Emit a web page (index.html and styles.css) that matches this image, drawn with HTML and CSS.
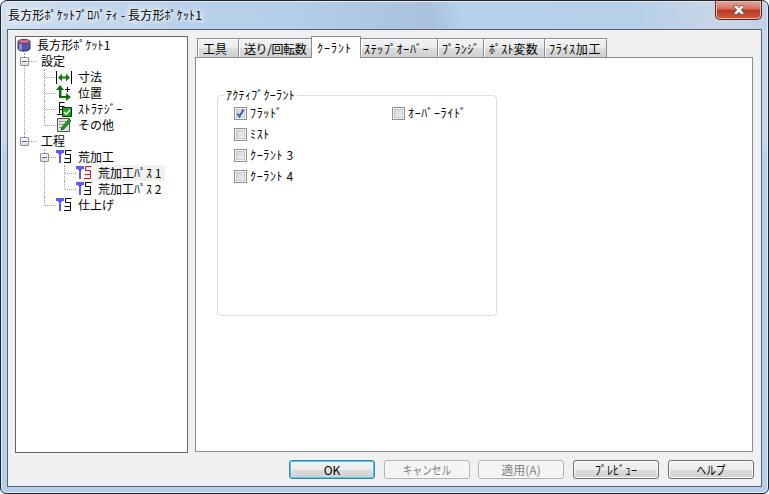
FILE: index.html
```
<!DOCTYPE html>
<html lang="ja">
<head>
    <meta charset="UTF-8">
    <title>長方形ﾎﾟｹｯﾄﾌﾟﾛﾊﾟﾃｨ</title>
    <link rel="stylesheet" href="styles.css">
</head>
<body>
    <svg class="defs" width="0" height="0">
        <symbol id="mill" viewBox="0 0 16 16">
            <path class="tool" d="M0 1h8v3H6v1H5v9H3V5H2V4H0z"/>
            <path class="path" d="M15.500 1.500H9.500v4h5v4H8.500M14.500 9.500v4H8"/>
        </symbol>
    </svg>
    <div class="window">
        <div class="titlebar">
            <span class="title">長方形ﾎﾟｹｯﾄﾌﾟﾛﾊﾟﾃｨ - 長方形ﾎﾟｹｯﾄ1</span>
            <button class="close">
                <svg width="12" height="10" viewBox="0 0 12 10"><path d="M1 .7h3.200L6 2.700 7.800.7H11V2L8.200 5 11 8v1.300H7.800L6 7.300 4.200 9.300H1V8l2.800-3L1 2z"/></svg>
            </button>
        </div>
        <div class="client">
            <div class="main">
                <div class="tree">
                    <div class="node root">
                        <svg class="icon" width="14" height="16" viewBox="0 0 14 16"><path d="M1 4.500v7c0 3.500 12 3.500 12 0v-7z" fill="#5555a8" stroke="#333360"/><path d="M3.500 6v7" stroke="#8c8ce0" stroke-width="3"/><ellipse cx="7" cy="4.500" rx="6" ry="2.200" fill="#c0708c" stroke="#5a3a5c"/></svg>
                        <span>長方形ﾎﾟｹｯﾄ1</span>
                    </div>
                    <ul class="level1">
                        <li>
                            <div class="node"><i class="toggle"></i><span>設定</span></div>
                            <ul>
                                <li><div class="node">
                                    <svg class="icon" width="16" height="16" viewBox="0 0 16 16"><path d="M.5 2v13M15.500 2v13" stroke="#000"/><path d="M2 8.500 6 4.500v3h4v-3l4 4-4 4v-3H6v3z" fill="#0a800a"/></svg>
                                    <span>寸法</span></div></li>
                                <li><div class="node">
                                    <svg class="icon" width="16" height="16" viewBox="0 0 16 16"><path d="M4 0 8 5H5.500v6H10V8l5 4-5 4v-3H3V5H0z" fill="#0a700a"/><path d="M9 4.500h5M11.500 2v5" stroke="#000"/></svg>
                                    <span>位置</span></div></li>
                                <li><div class="node">
                                    <svg class="icon" width="16" height="16" viewBox="0 0 16 16"><path d="M8.500 1.500h-5v4h5M3.500 5.500v3h4M3.500 8.500v4M1 13.500h6" fill="none" stroke="#000"/><path d="M6.500 6.500h9v9h-9z" fill="#20a020" stroke="#064006"/><path d="m8 11 2.200 2.200L14 9" fill="none" stroke="#fff" stroke-width="1.500"/></svg>
                                    <span class="kana">ｽﾄﾗﾃｼﾞｰ</span></div></li>
                                <li><div class="node">
                                    <svg class="icon" width="16" height="16" viewBox="0 0 16 16"><path d="M1.500 1.500h12v13h-12z" fill="#e4e4e4" stroke="#555"/><path d="M3 4.500h7M3 7.500h6M3 10.500h3" stroke="#999"/><path d="m5 13 1-3 7-8 2 2-7 8z" fill="#20a020" stroke="#064006" stroke-width=".7"/></svg>
                                    <span>その他</span></div></li>
                            </ul>
                        </li>
                        <li>
                            <div class="node"><i class="toggle"></i><span>工程</span></div>
                            <ul>
                                <li>
                                    <div class="node"><i class="toggle"></i><svg class="icon" width="16" height="16"><use href="#mill"/></svg><span>荒加工</span></div>
                                    <ul class="passes">
                                        <li><div class="node active"><svg class="icon" width="16" height="16"><use href="#mill"/></svg><span>荒加工ﾊﾟｽ 1</span></div></li>
                                        <li><div class="node"><svg class="icon" width="16" height="16"><use href="#mill"/></svg><span>荒加工ﾊﾟｽ 2</span></div></li>
                                    </ul>
                                </li>
                                <li><div class="node"><svg class="icon" width="16" height="16"><use href="#mill"/></svg><span>仕上げ</span></div></li>
                            </ul>
                        </li>
                    </ul>
                </div>
                <div class="content">
                    <div class="tabs">
                        <div class="tab tool-tab">工具</div>
                        <div class="tab feed-tab">送り/回転数</div>
                        <div class="tab coolant-tab selected">ｸｰﾗﾝﾄ</div>
                        <div class="tab step-tab">ｽﾃｯﾌﾟｵｰﾊﾞｰ</div>
                        <div class="tab plunge-tab">ﾌﾟﾗﾝｼﾞ</div>
                        <div class="tab post-tab">ﾎﾟｽﾄ変数</div>
                        <div class="tab mill-tab">ﾌﾗｲｽ加工</div>
                    </div>
                    <div class="panel">
                        <fieldset>
                            <legend>ｱｸﾃｨﾌﾞｸｰﾗﾝﾄ</legend>
                            <div class="options">
                                <label><i class="box"><svg width="9" height="9" viewBox="0 0 9 9"><path d="m1.500 4.500 2 3 4-7" fill="none" stroke="#3c5a9e" stroke-width="1.900"/></svg></i>ﾌﾗｯﾄﾞ</label>
                                <label><i class="box"></i>ｵｰﾊﾞｰﾗｲﾄﾞ</label>
                                <label><i class="box"></i>ﾐｽﾄ</label>
                                <label class="first"><i class="box"></i>ｸｰﾗﾝﾄ 3</label>
                                <label class="first"><i class="box"></i>ｸｰﾗﾝﾄ 4</label>
                            </div>
                        </fieldset>
                    </div>
                </div>
            </div>
            <div class="buttons">
                <button class="btn default">OK</button>
                <button class="btn cancel" disabled><span class="narrow">キャンセル</span></button>
                <button class="btn" disabled>適用(A)</button>
                <button class="btn">ﾌﾟﾚﾋﾞｭｰ</button>
                <button class="btn"><span class="narrow">ヘルプ</span></button>
            </div>
        </div>
    </div>
</body>
</html>
```
FILE: styles.css
```
* {
    box-sizing: border-box;
}
body {
    margin: 0;
    background: #fff;
    font: 12px/16px "Noto Sans CJK JP", sans-serif;
    color: #000;
    overflow: hidden;
}
.defs {
    position: absolute;
}
button {
    font: inherit;
    padding: 0;
}
.window {
    width: 769px;
    height: 494px;
    border: 1px solid #20242a;
    border-radius: 7px 7px 6px 6px;
    padding: 0 6px 6px;
    background:
        linear-gradient(75deg, #cfdff0 0, #b9d1ea 22%, #b4cfea 38%, #a9c1dc 56%, #b6d1ec 60%, #b6d0ea 82%, #c9d6e5 94%, #bcd2ea 100%) 0 0 / 100% 29px no-repeat,
        linear-gradient(#c8d9eb 0, #c8d9eb 28%, #b6d0ec 32%, #b6d0ec 100%);
    box-shadow: inset 0 0 0 1px #e4eef8;
}
.titlebar {
    height: 28px;
    display: flex;
    justify-content: space-between;
    padding-left: 1px;
}
.title {
    line-height: 27px;
    letter-spacing: .17px;
    text-shadow: 0 0 6px #fff, 0 0 6px #fff, 0 0 10px #fff;
}
.close {
    width: 47px;
    height: 19px;
    border: 1px solid #5b2424;
    border-top: 0;
    border-radius: 0 0 5px 5px;
    background: linear-gradient(#e5a598 0, #d3705e 45%, #b93620 50%, #d15c3c 100%);
    box-shadow: inset 0 0 0 1px #eebbb0;
    display: flex;
    align-items: center;
    justify-content: center;
}
.close path {
    fill: #fff;
    stroke: #505468;
    stroke-width: .8;
}
.client {
    height: 458px;
    border: 1px solid #58626e;
    background: #f0f0f0;
    padding: 6px 7px 0;
}
.main {
    display: flex;
    gap: 7px;
    height: 417px;
}
.tree {
    width: 173px;
    border: 1px solid #646464;
    background: #fff;
}
.tree ul {
    list-style: none;
    margin: 0;
    padding: 0;
}
.node {
    height: 16px;
    display: flex;
    align-items: center;
    white-space: nowrap;
}
.node span {
    padding: 0 2px;
}
.node .kana {
    letter-spacing: .45px;
}
.icon {
    flex: none;
    margin-right: 4px;
}
.root {
    padding-left: 1px;
    letter-spacing: .1px;
}
.tree .level1 {
    padding-left: 8px;
}
.level1 li {
    position: relative;
    padding-left: 15px;
}
.level1 ul {
    padding-left: 5px;
}
.level1 ul li {
    padding-left: 12px;
}
.level1 .passes {
    padding-left: 8px;
}
/* dotted connector lines */
.level1 li::before {
    content: "";
    position: absolute;
    left: 0;
    top: 0;
    height: 100%;
    border-left: 1px dotted #a0a0a0;
}
.level1 li:last-child::before {
    height: 8px;
}
.level1 li::after {
    content: "";
    position: absolute;
    left: 1px;
    top: 8px;
    width: 11px;
    border-top: 1px dotted #a0a0a0;
}
.toggle {
    position: absolute;
    z-index: 1;
    left: -4px;
    top: 4px;
    width: 9px;
    height: 9px;
    border: 1px solid #919191;
    border-radius: 1px;
    background: linear-gradient(#4b63a7, #4b63a7) center / 5px 1px no-repeat, linear-gradient(#fff, #dcdcdc);
}
.tool {
    fill: #5a5aff;
}
.path {
    fill: none;
    stroke: var(--path-color, #000);
}
.active .icon {
    --path-color: #f00;
}
.active span {
    background: #f0f0f0;
    padding-right: 4px;
}
.content {
    width: 558px;
}
.tabs {
    height: 21px;
    display: flex;
    align-items: flex-end;
    padding-left: 2px;
}
.tab {
    height: 19px;
    border: 1px solid #898c95;
    border-width: 1px 1px 0 0;
    background: linear-gradient(#f2f2f2, #ebebeb 50%, #dddddd 50%, #cfcfcf);
    box-shadow: inset 1px 1px 0 #fcfcfc;
    padding-left: 5px;
    line-height: 20px;
    white-space: nowrap;
}
.tab:first-child {
    border-left-width: 1px;
}
.selected {
    position: relative;
    height: 22px;
    margin: 0 0 -1px -1px;
    border-left-width: 1px;
    background: #fff;
    line-height: 21px;
}
.tool-tab { width: 42px; }
.feed-tab { width: 73px; letter-spacing: -.4px; }
.coolant-tab { width: 50px; letter-spacing: 1px; }
.step-tab { width: 77px; padding-left: 3px; letter-spacing: .65px; }
.plunge-tab { width: 46px; letter-spacing: .4px; padding-left: 4px; }
.post-tab { width: 61px; letter-spacing: .2px; }
.mill-tab { width: 62px; letter-spacing: .7px; padding-left: 4px; }
.panel {
    height: 395px;
    border: 1px solid #898c95;
    background: #fff;
    padding: 29px 0 0 21px;
}
fieldset {
    width: 280px;
    height: 229px;
    margin: 0;
    padding: 0 0 0 16px;
    border: 1px solid #d5dfe5;
    border-radius: 4px;
}
legend {
    margin-left: -10px;
    padding: 0 2px;
    height: 16px;
    letter-spacing: .3px;
}
.options {
    display: grid;
    grid-template-columns: 158px 1fr;
    grid-auto-rows: 21px;
    padding-top: 2px;
}
label {
    display: flex;
    align-items: center;
    height: 16px;
    letter-spacing: .65px;
}
.first {
    grid-column: 1;
}
.box {
    width: 13px;
    height: 13px;
    margin-right: 3px;
    border: 1px solid #8e8f8f;
    background: linear-gradient(135deg, #cbcfd5, #f6f6f6);
    box-shadow: inset 0 0 0 1px #f4f4f4, inset 0 0 0 2px #c5c9cf;
    display: flex;
    align-items: center;
    justify-content: center;
}
.buttons {
    display: flex;
    gap: 9px;
    justify-content: flex-end;
    padding-top: 7px;
}
.btn {
    width: 86px;
    height: 19px;
    border: 1px solid #707070;
    border-radius: 3px;
    background: linear-gradient(#f2f2f2, #ebebeb 50%, #dddddd 50%, #cfcfcf);
    box-shadow: inset 0 0 0 1px #fbfbfb;
    color: #000;
    line-height: 16px;
}
.default {
    border-color: #3c7fb1;
    box-shadow: inset 0 0 0 1px #46d0f5;
}
.cancel {
    margin-right: -1px;
}
.btn:disabled {
    border-color: #adb2b5;
    background: #f4f4f4;
    color: #838383;
}
.narrow {
    display: inline-block;
    transform: scaleX(.81);
}
```
